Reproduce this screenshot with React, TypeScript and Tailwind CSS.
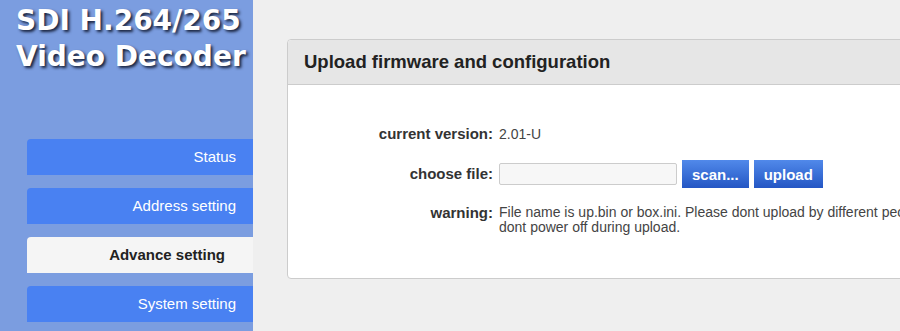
const navItems = [
  { label: 'Status', active: false },
  { label: 'Address setting', active: false },
  { label: 'Advance setting', active: true },
  { label: 'System setting', active: false },
];

function Sidebar() {
  return (
    <aside className="w-[253px] shrink-0 bg-[#7b9de0] h-[331px] flex flex-col">
      <h1
        className="pl-4 pt-[3px] text-[28px] leading-[36px] font-bold text-white whitespace-nowrap"
        style={{ fontFamily: '"DejaVu Sans", Verdana, sans-serif', textShadow: '2px 2px 3px #18223c' }}
      >
        SDI H.264/265
        <br />
        Video Decoder
      </h1>
      <nav className="mt-[64px] ml-[27px] flex flex-col gap-[13px]">
        {navItems.map((item) =>
          item.active ? (
            <div
              key={item.label}
              className="h-[36px] flex items-center justify-end pr-[28px] rounded-tl-[4px] bg-[#f5f5f5] text-[15px] font-bold text-[#222]"
            >
              {item.label}
            </div>
          ) : (
            <div
              key={item.label}
              className="h-[36px] flex items-center justify-end pr-[17px] rounded-tl-[4px] bg-[#4981f2] text-[15px] text-white"
            >
              {item.label}
            </div>
          )
        )}
      </nav>
    </aside>
  );
}

function BlueButton({ children }: { children: React.ReactNode }) {
  return (
    <button className="h-[28px] px-[10px] bg-gradient-to-b from-[#5189ea] to-[#2456c4] text-white text-[15px] font-bold leading-none">
      {children}
    </button>
  );
}

function UploadPanel() {
  return (
    <section className="mt-[39px] ml-[34px] w-[700px] shrink-0 border border-[#cccccc] rounded-[4px] bg-white">
      <header className="h-[45px] flex items-center pl-[16px] bg-[#e6e6e6] border-b border-[#cccccc] rounded-t-[4px]">
        <h2 className="text-[18.5px] font-bold text-[#222]">Upload firmware and configuration</h2>
      </header>
      <div className="pt-[38px] pb-[43px]">
        <div className="grid grid-cols-[205px_1fr] gap-x-[6px] items-center h-[18px]">
          <span className="text-right text-[15px] font-bold text-[#333]">current version:</span>
          <span className="text-[14px] text-[#444]">2.01-U</span>
        </div>
        <div className="mt-[19px] grid grid-cols-[205px_1fr] gap-x-[6px] items-center h-[28px]">
          <span className="text-right text-[15px] font-bold text-[#333]">choose file:</span>
          <div className="flex items-center gap-[5px]">
            <input
              type="text"
              readOnly
              className="w-[178px] h-[22px] border border-[#cccccc] rounded-[2px] bg-[#f7f7f7]"
            />
            <BlueButton>scan...</BlueButton>
            <BlueButton>upload</BlueButton>
          </div>
        </div>
        <div className="mt-[17px] grid grid-cols-[205px_1fr] gap-x-[6px] items-start">
          <span className="text-right text-[15px] leading-[15px] font-bold text-[#333]">warning:</span>
          <p className="text-[14px] leading-[15px] text-[#444] whitespace-nowrap">
            File name is up.bin or box.ini. Please dont upload by different people at the same time and
            <br />
            dont power off during upload.
          </p>
        </div>
      </div>
    </section>
  );
}

export default function App() {
  return (
    <div
      className="w-[900px] h-[331px] flex bg-[#efefef] overflow-hidden"
      style={{ fontFamily: '"Liberation Sans", Arial, sans-serif' }}
    >
      <Sidebar />
      <main className="flex-1 flex items-start overflow-hidden">
        <UploadPanel />
      </main>
    </div>
  );
}
